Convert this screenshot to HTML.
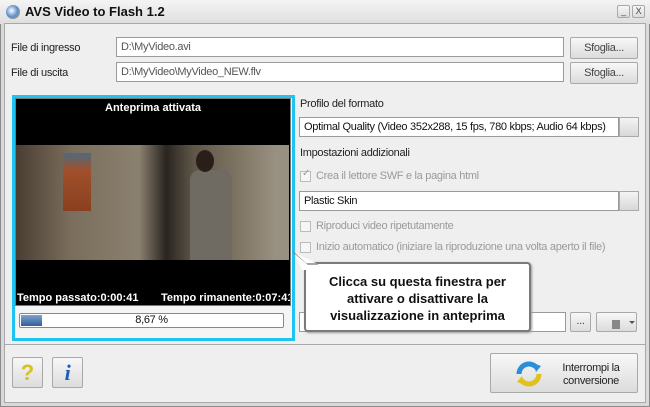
<!DOCTYPE html>
<html><head><style>
*{margin:0;padding:0;box-sizing:border-box}
body{width:650px;height:407px;background:#fff;font-family:"Liberation Sans",sans-serif;font-size:11px;letter-spacing:-0.3px;color:#222;position:relative;overflow:hidden}
.a{position:absolute}
.win{left:0;top:0;width:650px;height:407px;background:#d9d9d9;border:1px solid #8a8a8a}
.title{left:0;top:0;width:650px;height:24px;background:linear-gradient(#f4f4f4,#dedede)}
.main{left:4px;top:23px;width:642px;height:380px;background:#efefef;border:1px solid #a8a8a8}
.inp{background:#fff;border:1px solid #9a9a9a;color:#555;padding:3px 4px;height:20px}
.btn{background:linear-gradient(#f7f7f7,#dcdcdc);border:1px solid #a9a9a9;border-radius:2px;text-align:center;color:#444}
.lbl{color:#222}
.dis{color:#9a9a9a}
.cb{width:11px;height:11px;border:1px solid #bbb;background:#f6f6f6}
.arr{width:20px;height:20px;background:linear-gradient(#f4f4f4,#d8d8d8);border:1px solid #aaa}
</style></head><body>
<div class="a win"></div>
<div class="a title"></div>
<div class="a" style="left:6px;top:5px;width:14px;height:14px;border-radius:50%;background:radial-gradient(circle at 40% 40%,#fff,#5b8fd0 50%,#d9a520)"></div>
<div class="a" style="left:25px;top:4px;font-weight:bold;font-size:13px;letter-spacing:0;color:#111">AVS Video to Flash 1.2</div>
<div class="a btn" style="left:617px;top:5px;width:13px;height:13px;font-size:9px;line-height:11px">_</div>
<div class="a btn" style="left:632px;top:5px;width:13px;height:13px;font-size:9px;line-height:11px">X</div>
<div class="a main"></div>

<div class="a lbl" style="left:11px;top:42px">File di ingresso</div>
<div class="a inp" style="left:116px;top:37px;width:448px">D:\MyVideo.avi</div>
<div class="a btn" style="left:570px;top:37px;width:68px;height:22px;line-height:20px">Sfoglia...</div>
<div class="a lbl" style="left:11px;top:67px">File di uscita</div>
<div class="a inp" style="left:116px;top:62px;width:448px">D:\MyVideo\MyVideo_NEW.flv</div>
<div class="a btn" style="left:570px;top:62px;width:68px;height:22px;line-height:20px">Sfoglia...</div>

<div class="a" style="left:12px;top:95px;width:283px;height:246px;border:3px solid #1ec4ef;background:#f4f4f4"></div>
<div class="a" style="left:15px;top:98px;width:276px;height:208px;background:#000;border:1px solid #777"></div>
<div class="a" style="left:15px;top:102px;width:276px;text-align:center;color:#fff;font-weight:bold;letter-spacing:0">Anteprima attivata</div>
<div class="a" style="left:16px;top:145px;width:273px;height:115px;background:linear-gradient(90deg,#4a3e32 0%,#7a6d5c 20%,#8b8170 45%,#2a2520 55%,#5e5648 65%,#7c7262 80%,#989080 95%)"></div>
<div class="a" style="left:63px;top:153px;width:28px;height:58px;background:linear-gradient(#4c6b80,#a0502a 30%,#8a4020)"></div>
<div class="a" style="left:190px;top:170px;width:42px;height:90px;background:#6f6a62;border-radius:10px 10px 0 0"></div>
<div class="a" style="left:196px;top:150px;width:18px;height:22px;background:#2a1e18;border-radius:50%"></div>
<div class="a" style="left:17px;top:292px;color:#fff;font-weight:bold;letter-spacing:0">Tempo passato:0:00:41</div>
<div class="a" style="left:161px;top:292px;color:#fff;font-weight:bold;letter-spacing:0;width:129px;overflow:hidden;white-space:nowrap">Tempo rimanente:0:07:41</div>
<div class="a" style="left:19px;top:313px;width:265px;height:15px;border:1px solid #888;background:#fff;border-radius:2px;text-align:center;line-height:13px;color:#111">8,67 %</div>
<div class="a" style="left:21px;top:315px;width:21px;height:11px;background:linear-gradient(#7fa3cf,#2f5f9b)"></div>

<div class="a lbl" style="left:300px;top:98px">Profilo del formato</div>
<div class="a inp" style="left:299px;top:117px;width:320px;color:#111">Optimal Quality (Video 352x288, 15 fps, 780 kbps; Audio 64 kbps)</div>
<div class="a arr" style="left:619px;top:117px"></div>
<div class="a lbl" style="left:300px;top:147px">Impostazioni addizionali</div>
<div class="a cb" style="left:300px;top:171px"></div>
<div class="a dis" style="left:302px;top:168px;font-size:10px">✓</div>
<div class="a dis" style="left:316px;top:170px">Crea il lettore SWF e la pagina html</div>
<div class="a inp" style="left:299px;top:191px;width:320px;color:#111">Plastic Skin</div>
<div class="a arr" style="left:619px;top:191px"></div>
<div class="a cb" style="left:300px;top:221px"></div>
<div class="a dis" style="left:316px;top:220px">Riproduci video ripetutamente</div>
<div class="a cb" style="left:300px;top:242px"></div>
<div class="a dis" style="left:316px;top:241px">Inizio automatico (iniziare la riproduzione una volta aperto il file)</div>
<div class="a inp" style="left:299px;top:312px;width:267px"></div>
<div class="a btn" style="left:570px;top:312px;width:21px;height:20px;line-height:16px">...</div>
<div class="a btn" style="left:596px;top:312px;width:41px;height:20px"></div>
<div class="a" style="left:612px;top:320px;width:8px;height:9px;background:#888"></div>
<div class="a" style="left:629px;top:321px;border:3px solid transparent;border-top:3px solid #555"></div>

<div class="a" style="left:304px;top:262px;width:227px;height:70px;background:#fff;border:2px solid #7a7a7a;border-radius:4px;box-shadow:1px 1px 2px #999;text-align:center;font-weight:bold;font-size:13px;letter-spacing:0;line-height:17px;padding-top:9px;color:#111">Clicca su questa finestra per<br>attivare o disattivare la<br>visualizzazione in anteprima</div>
<svg class="a" style="left:292px;top:251px" width="30" height="20"><path d="M1 1 L14 13 L26 13" fill="#fff" stroke="#888" stroke-width="1.5"/><path d="M3 3 L16 14 L28 14 L28 19 L10 19Z" fill="#fff"/></svg>

<div class="a" style="left:5px;top:344px;width:640px;height:1px;background:#a8a8a8"></div>
<div class="a btn" style="left:12px;top:357px;width:31px;height:31px;font-size:22px;font-weight:bold;color:#d6c11e;line-height:29px;letter-spacing:0">?</div>
<div class="a btn" style="left:52px;top:357px;width:31px;height:31px;font-size:22px;font-weight:bold;font-style:italic;color:#1c5fb3;line-height:29px;font-family:'Liberation Serif',serif">i</div>
<div class="a btn" style="left:490px;top:353px;width:148px;height:40px"></div>
<svg class="a" style="left:515px;top:360px" width="28" height="28"><path d="M4 14 A10 10 0 0 1 22 8" stroke="#2a8fd8" stroke-width="5" fill="none"/><path d="M24 14 A10 10 0 0 1 6 20" stroke="#e0c21a" stroke-width="5" fill="none"/><path d="M18 3 L26 6 L21 12Z" fill="#2a8fd8"/><path d="M10 25 L2 22 L7 16Z" fill="#e0c21a"/></svg>
<div class="a" style="left:551px;top:362px;width:80px;text-align:center;line-height:13px;color:#222">Interrompi la<br>conversione</div>
</body></html>
